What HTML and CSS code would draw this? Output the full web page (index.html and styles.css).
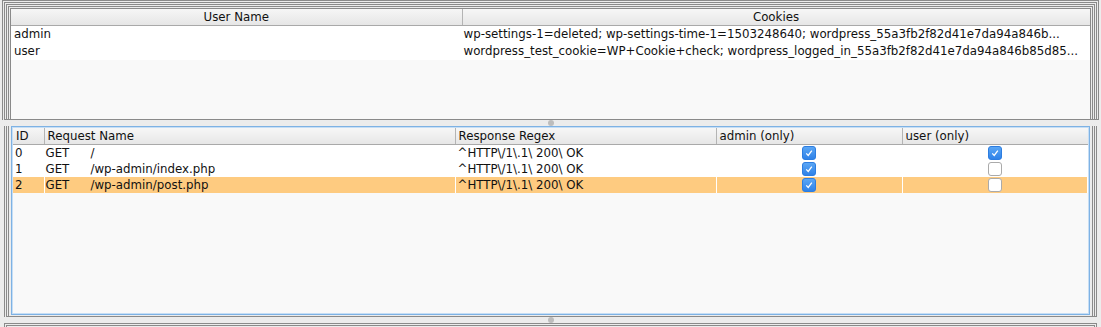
FILE: index.html
```html
<!DOCTYPE html>
<html lang="en">
<head>
    <meta charset="UTF-8">
    <title>Users and Requests</title>
    <link rel="stylesheet" href="styles.css">
</head>
<body>
    <div class="split">
        <div class="pane pane-top">
            <div class="frame">
                <div class="view">
                    <table class="grid users">
                        <colgroup>
                            <col class="c-user">
                            <col>
                        </colgroup>
                        <thead>
                            <tr><th class="center">User Name</th><th class="center">Cookies</th></tr>
                        </thead>
                        <tbody>
                            <tr><td>admin</td><td>wp-settings-1=deleted; wp-settings-time-1=1503248640; wordpress_55a3fb2f82d41e7da94a846b...</td></tr>
                            <tr><td>user</td><td>wordpress_test_cookie=WP+Cookie+check; wordpress_logged_in_55a3fb2f82d41e7da94a846b85d85...</td></tr>
                        </tbody>
                    </table>
                </div>
            </div>
        </div>

        <div class="divider"><span class="grip"></span></div>

        <div class="pane pane-bottom">
            <div class="frame">
                <div class="view focused">
                    <table class="grid requests">
                        <colgroup>
                            <col class="c-id">
                            <col class="c-name">
                            <col class="c-regex">
                            <col class="c-admin">
                            <col>
                        </colgroup>
                        <thead>
                            <tr>
                                <th>ID</th>
                                <th>Request Name</th>
                                <th>Response Regex</th>
                                <th>admin (only)</th>
                                <th>user (only)</th>
                            </tr>
                        </thead>
                        <tbody>
                            <tr>
                                <td>0</td>
                                <td class="name"><span class="method">GET</span>/</td>
                                <td>^HTTP\/1\.1\ 200\ OK</td>
                                <td class="check"><span class="box on"><svg viewBox="0 0 14 14"><path d="M3.8 7.4 L6.1 9.8 L10.3 4.3"/></svg></span></td>
                                <td class="check"><span class="box on"><svg viewBox="0 0 14 14"><path d="M3.8 7.4 L6.1 9.8 L10.3 4.3"/></svg></span></td>
                            </tr>
                            <tr>
                                <td>1</td>
                                <td class="name"><span class="method">GET</span>/wp-admin/index.php</td>
                                <td>^HTTP\/1\.1\ 200\ OK</td>
                                <td class="check"><span class="box on"><svg viewBox="0 0 14 14"><path d="M3.8 7.4 L6.1 9.8 L10.3 4.3"/></svg></span></td>
                                <td class="check"><span class="box"></span></td>
                            </tr>
                            <tr class="selected">
                                <td>2</td>
                                <td class="name"><span class="method">GET</span>/wp-admin/post.php</td>
                                <td>^HTTP\/1\.1\ 200\ OK</td>
                                <td class="check"><span class="box on"><svg viewBox="0 0 14 14"><path d="M3.8 7.4 L6.1 9.8 L10.3 4.3"/></svg></span></td>
                                <td class="check"><span class="box"></span></td>
                            </tr>
                        </tbody>
                    </table>
                </div>
            </div>
        </div>

        <div class="divider"><span class="grip"></span></div>

        <div class="pane pane-next"></div>
    </div>
</body>
</html>
```

FILE: styles.css
```css
body {
    margin: 0;
    background-color: #ececec;
    font-family: "DejaVu Sans", sans-serif;
    font-size: 11.8px;
    color: #111;
    width: 1101px;
    height: 327px;
    overflow: hidden;
}

.split {
    margin: 0 2px;
    height: 327px;
    display: flex;
    flex-direction: column;
}

.pane {
    box-sizing: border-box;
    display: flex;
    flex-direction: column;
}

.pane-top {
    height: 120px;
    border: 3px double #8a8a8a;
    border-bottom: 1px solid #8a8a8a;
    padding: 1px 1px 0;
}

.pane-top .frame {
    flex: 1;
    display: flex;
    border: 3px double #8a8a8a;
    border-bottom: 0;
    padding: 1px 1px 0;
}

.pane-top .view {
    flex: 1;
    border: 1px solid #8a8a8a;
    border-bottom: 0;
}

.pane-bottom {
    height: 191px;
    margin: 0 2px;
    border-left: 3px double #8a8a8a;
    border-right: 3px double #8a8a8a;
    border-bottom: 1px solid #8a8a8a;
    padding: 0 1px;
}

.pane-bottom .frame {
    flex: 1;
    display: flex;
    border-left: 1px solid #8a8a8a;
    border-right: 1px solid #8a8a8a;
    padding: 0 2px 1px;
}

.view {
    background-color: #f9f9f9;
    overflow: hidden;
    display: flex;
    flex-direction: column;
}

.focused {
    flex: 1;
    border: 1px solid #7eb2e4;
    box-shadow: inset 0 0 0 1px #c6def5;
    padding: 1px;
}

.pane-next {
    flex: 1;
    margin: 0 2px;
    border: 3px double #8a8a8a;
    border-bottom: 0;
}

.divider {
    height: 6px;
    display: flex;
    justify-content: center;
    align-items: center;
}

.grip {
    width: 6px;
    height: 6px;
    border-radius: 50%;
    background-color: #bdbdbd;
}

.grid {
    width: 100%;
    border-collapse: collapse;
    table-layout: fixed;
}

.grid th {
    height: 16px;
    padding: 0 3px;
    font-weight: normal;
    text-align: left;
    white-space: nowrap;
    background: linear-gradient(#f6f6f6, #e6e6e6);
    border-right: 1px solid #b4b4b4;
    border-bottom: 1px solid #a9a9a9;
    box-sizing: border-box;
}

.grid th:last-child {
    border-right: 0;
}

.grid th.center {
    text-align: center;
}

.grid td {
    padding: 0 2px;
    white-space: nowrap;
    overflow: hidden;
    background-color: #fff;
    border-right: 1px solid #fff;
}

.users td {
    height: 17px;
    padding-left: 3px;
}

.users td + td {
    padding-left: 1px;
}

.requests td {
    height: 16px;
}

.requests td.name {
    padding-left: 1px;
}

.c-user {
    width: 451px;
}

.c-id {
    width: 31px;
}

.c-name {
    width: 411px;
}

.c-regex {
    width: 261px;
}

.c-admin {
    width: 186px;
}

.method {
    display: inline-block;
    width: 45px;
}

.selected td {
    background-color: #fecb80;
}

.check {
    text-align: center;
}

.box {
    display: inline-block;
    width: 14px;
    height: 14px;
    border: 1px solid #aaaaaa;
    border-radius: 3px;
    background-color: #fff;
    vertical-align: middle;
    box-sizing: border-box;
}

.box.on {
    border-color: #2d7de0;
    background: linear-gradient(#5aa6f5, #2f82e8);
}

.box svg {
    display: block;
    width: 12px;
    height: 12px;
    fill: none;
    stroke: #fff;
    stroke-width: 1.5;
}
```
